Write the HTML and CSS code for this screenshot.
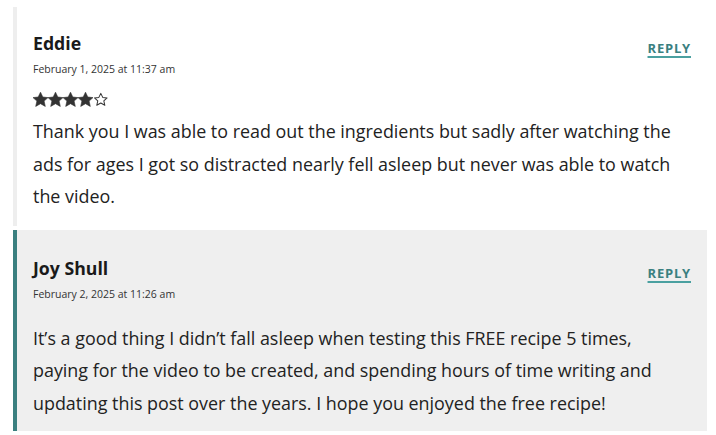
FILE: index.html
```html
<!DOCTYPE html>
<html>
<head>
<meta charset="utf-8">
<link rel="stylesheet" href="styles.css">
</head>
<body>
<div class="list">
  <div class="comment">
    <div class="head">
      <div class="meta">
        <div class="name">Eddie</div>
        <div class="date">February 1, 2025 at 11:37 am</div>
      </div>
      <a class="reply" href="#">REPLY</a>
    </div>
    <div class="stars">
      <svg width="76" height="16" viewBox="0 0 76 16">
        <defs>
          <path id="st" d="M7.5 0.2 L9.8 5 L15 5.6 L11.1 9.1 L12.3 14.4 L7.5 11.7 L2.7 14.4 L3.9 9.1 L0 5.6 L5.2 5 Z" stroke-linejoin="round"/>
        </defs>
        <use href="#st" x="0" fill="#333" stroke="#333" stroke-width="0.6"/>
        <use href="#st" x="15" fill="#333" stroke="#333" stroke-width="0.6"/>
        <use href="#st" x="30" fill="#333" stroke="#333" stroke-width="0.6"/>
        <use href="#st" x="45" fill="#333" stroke="#333" stroke-width="0.6"/>
        <g transform="translate(61.5 1.2) scale(0.84)"><use href="#st" fill="none" stroke="#333" stroke-width="1.2"/></g>
      </svg>
    </div>
    <p class="text">Thank you I was able to read out the ingredients but sadly after watching the ads for ages I got so distracted nearly fell asleep but never was able to watch the video.</p>
  </div>
  <div class="comment author">
    <div class="head">
      <div class="meta">
        <div class="name">Joy Shull</div>
        <div class="date">February 2, 2025 at 11:26 am</div>
      </div>
      <a class="reply" href="#">REPLY</a>
    </div>
    <p class="text gap">It’s a good thing I didn’t fall asleep when testing this FREE recipe 5 times, paying for the video to be created, and spending hours of time writing and updating this post over the years. I hope you enjoyed the free recipe!</p>
  </div>
</div>
</body>
</html>
```
FILE: styles.css
```css
html, body { margin: 0; padding: 0; background: #fff; }
body { font-family: "Open Sans", "Liberation Sans", sans-serif; color: #222; }
.list { padding: 7px 9px 0 13px; display: flex; flex-direction: column; gap: 4px; }
.comment { border-left: 4px solid #eeeeee; padding: 24px 16px 13px 16px; }
.comment.author { background: #efefef; border-left-color: #3a7f7f; padding-top: 26px; padding-bottom: 12px; }
.head { display: flex; justify-content: space-between; align-items: flex-start; }
.name { font-size: 17.7px; font-weight: 700; line-height: 24px; color: #1a1a1a; }
.date { font-size: 10.5px; line-height: 16px; margin-top: 6px; color: #333; }
.reply { font-size: 13px; font-weight: 700; letter-spacing: 0.8px; color: #3a8080; text-decoration: underline; text-decoration-color: #4aa0a0; text-underline-offset: 3px; text-decoration-thickness: 2px; margin-top: 8px; }
.stars { margin-top: 15px; height: 16px; line-height: 0; }
.text { margin: 7px 0 0; font-size: 17.9px; line-height: 32.5px; color: #222; }
.text.gap { margin-top: 20px; }
```
